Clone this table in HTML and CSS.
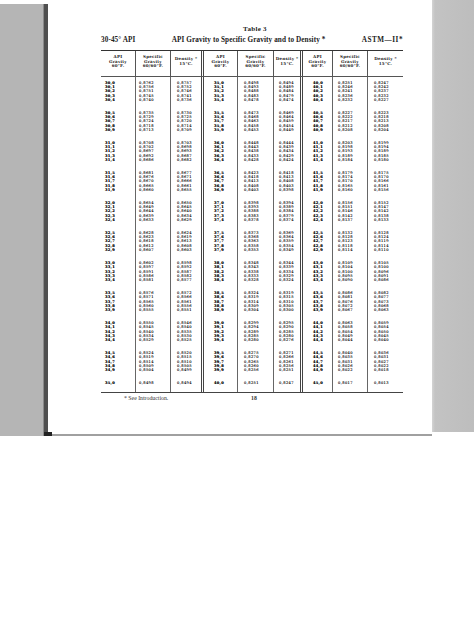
FILE: index.html
```html
<!DOCTYPE html>
<html lang="en">
<head>
<meta charset="utf-8">
<title>Table 3 — API Gravity to Specific Gravity and to Density</title>
<link rel="stylesheet" href="styles.css">
</head>
<body>
<div class="scan">
  <div class="shade-left"></div>
  <div class="page">
    <div class="sheet">
      <h1 class="title">Table 3</h1>
      <div class="caption">
        <span>30-45° API</span>
        <span>API Gravity to Specific Gravity and to Density *</span>
        <span class="astm">ASTM—II*</span>
      </div>
      <div class="tbl">
        <div class="thead">
          <div class="th">API<br>Gravity<br>60°F.</div>
          <div class="th">Specific<br>Gravity<br>60/60°F.</div>
          <div class="th gsep">Density *<br>15°C.</div>
          <div class="th">API<br>Gravity<br>60°F.</div>
          <div class="th">Specific<br>Gravity<br>60/60°F.</div>
          <div class="th gsep">Density *<br>15°C.</div>
          <div class="th">API<br>Gravity<br>60°F.</div>
          <div class="th">Specific<br>Gravity<br>60/60°F.</div>
          <div class="th">Density *<br>15°C.</div>
        </div>
        <div class="tbody" id="tbody"></div>
      </div>
      <div class="foot">
        <span class="note">* See Introduction.</span>
        <span class="folio">18</span>
      </div>
    </div>
  </div>
  <div class="shade-right"></div>
</div>
<script src="script.js"></script>
</body>
</html>
```

FILE: styles.css
```css
* { box-sizing: border-box; }
html, body { margin: 0; padding: 0; background: #fff; }
body {
  width: 474px;
  height: 632px;
  overflow: hidden;
  font-family: "Liberation Serif", "DejaVu Serif", serif;
  color: #222;
}
.scan { display: flex; align-items: flex-start; }
.shade-left {
  width: 44px;
  height: 432px;
  margin-top: 4px;
  background: #b5b5b5;
}
.page {
  position: relative;
  width: 388px;
  height: 432px;
  margin-top: 4px;
  border-left: 4px solid #4f4f4f;
  border-bottom: 2px solid #a0a0a0;
  box-shadow: -1px 0 0 #8a8a8a;
}
.page::after {
  content: "";
  position: absolute;
  left: -4px;
  bottom: -2px;
  width: 8px;
  height: 4px;
  background: #222;
}
.shade-right {
  width: 42px;
  height: 432px;
  background: linear-gradient(to right, #d4d4d4 0, #c3c3c3 3px, #bdbdbd 100%);
}
.sheet { padding: 21px 0 0 53px; }
.title {
  margin: 0;
  width: 302px;
  font-size: 7px;
  line-height: 8px;
  font-weight: bold;
  text-align: center;
  letter-spacing: 0.3px;
  padding-left: 6px;
}
.caption {
  width: 302px;
  margin-top: 3px;
  display: flex;
  justify-content: space-between;
  font-size: 7.2px;
  line-height: 8px;
  font-weight: bold;
  letter-spacing: 0.1px;
}
.astm { letter-spacing: 0.5px; }
.tbl {
  width: 302px;
  margin-top: 6px;
  border-top: 1.5px solid #333;
  border-bottom: 1px solid #444;
}
.thead, .tbody {
  display: grid;
  grid-template-columns: 35px 35px 33px 34px 36px 29px 30px 35px 35px;
}
.thead { height: 26px; border-bottom: 1px solid #555; }
.th {
  display: flex;
  align-items: center;
  justify-content: center;
  text-align: center;
  padding-bottom: 3px;
  font-family: "DejaVu Serif", "Liberation Serif", serif;
  font-size: 4.1px;
  line-height: 4.8px;
  letter-spacing: 0.2px;
  font-weight: bold;
  color: #1c1c1c;
  border-right: 1px solid #555;
}
.th:last-child, .col:last-child { border-right: none; }
.th.gsep, .col.gsep { border-right: 3px double #444; }
.col {
  border-right: 1px solid #666;
  padding: 4px 0 6.5px;
  font-family: "DejaVu Serif", "Liberation Serif", serif;
  font-size: 3.6px;
  line-height: 4.2px;
  letter-spacing: 0.4px;
  color: #1e1e1e;
  text-shadow: 0 0 0.4px #333;
  white-space: nowrap;
}
.grp { margin-bottom: 9px; }
.grp:last-child { margin-bottom: 0; }
.api { font-weight: bold; color: #141414; letter-spacing: 0.3px; }
.c1 { padding-left: 4px; }
.c2 { padding-left: 3px; }
.c3 { padding-left: 6px; }
.c4 { padding-left: 10px; }
.c5 { padding-left: 6px; }
.c6 { padding-left: 5px; }
.c7 { padding-left: 10px; }
.c8 { padding-left: 5px; }
.c9 { padding-left: 6px; }
.foot {
  display: flex;
  margin-top: 2px;
  font-size: 5.8px;
  line-height: 7px;
  color: #333;
}
.note { width: 150px; padding-left: 23px; }
.folio { font-weight: bold; }
```

FILE: script.js
```js
(function () {
  var tbody = document.getElementById('tbody');
  var kinds = ['api', 'sg', 'den'];
  function fmt4(x) { return x.toFixed(4).replace('.', ','); }
  for (var s = 0; s < 3; s++) {
    for (var k = 0; k < 3; k++) {
      var n = s * 3 + k + 1;
      var col = document.createElement('div');
      col.className = 'col ' + kinds[k] + ' c' + n + (k === 2 && s < 2 ? ' gsep' : '');
      for (var g = 0; g < 11; g++) {
        var grp = document.createElement('div');
        grp.className = 'grp';
        var rows = g < 10 ? 5 : 1;
        for (var r = 0; r < rows; r++) {
          var tenths = 300 + 50 * s + g * 5 + r;
          var api = tenths / 10;
          var sg = 141.5 / (api + 131.5);
          var den = sg * 0.99951;
          var line = document.createElement('div');
          if (k === 0) line.textContent = api.toFixed(1).replace('.', ',');
          else if (k === 1) line.textContent = fmt4(sg);
          else line.textContent = fmt4(den);
          grp.appendChild(line);
        }
        col.appendChild(grp);
      }
      tbody.appendChild(col);
    }
  }
})();
```
